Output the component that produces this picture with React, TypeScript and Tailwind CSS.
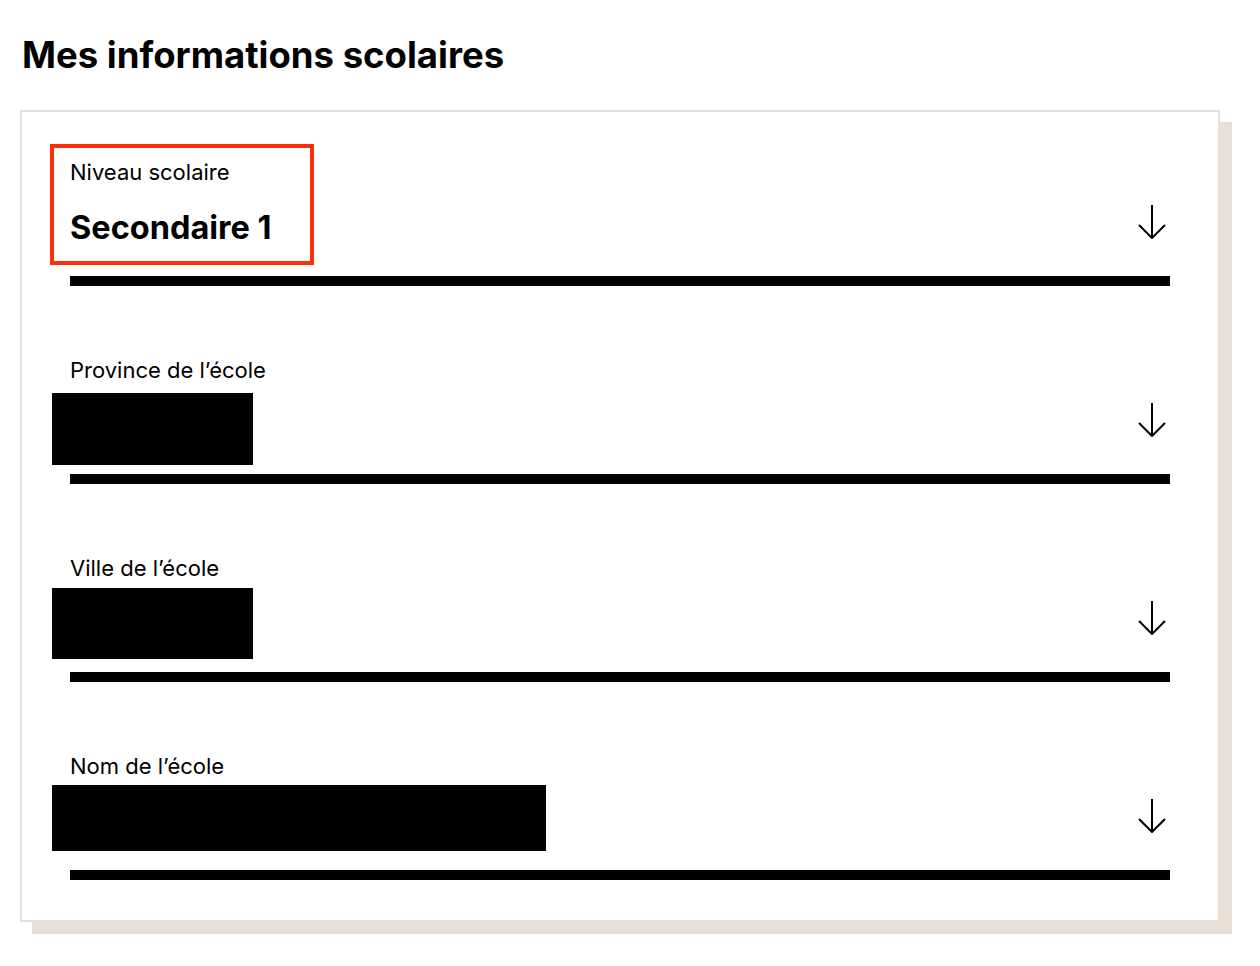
const fields = [
  { label: 'Niveau scolaire', value: 'Secondaire 1' },
  { label: 'Province de l’école', redact: 'mt-[11px] h-[72px] w-[201px]' },
  { label: 'Ville de l’école', redact: 'mt-[8px] h-[71px] w-[201px]' },
  { label: 'Nom de l’école', redact: 'mt-[7px] h-[66px] w-[494px]' },
];

function ArrowDown() {
  return (
    <svg width="28" height="34" viewBox="0 0 28 34" fill="none" className="mt-[21px] mr-[4px] shrink-0">
      <path d="M14 0V33" stroke="black" strokeWidth="2" />
      <path d="M1 20L14 33L27 20" stroke="black" strokeWidth="2" />
    </svg>
  );
}

function Field({ label, value, redact }: { label: string; value?: string; redact?: string }) {
  return (
    <div className="flex flex-col">
      <div className="relative">
        <div className="h-7 pt-[2px] text-[22px] leading-7">{label}</div>
        {value && (
          <div className="absolute -left-[20px] -top-[12px] w-[264px] h-[121px] border-4 border-[#ff2e0a]" />
        )}
      </div>
      <div className="flex h-[92px] items-start justify-between">
        {value ? (
          <div className="mt-[24px] text-[32.5px] leading-10 font-bold">{value}</div>
        ) : (
          <div className={`-ml-[18px] bg-black ${redact}`} />
        )}
        <ArrowDown />
      </div>
      <div className="h-[10px] bg-black" />
    </div>
  );
}

export default function App() {
  return (
    <div className="min-h-screen bg-white text-black px-[20px] pt-[30px]" style={{ fontFamily: 'Inter, "Noto Sans", sans-serif' }}>
      <h1 className="text-[36.5px] leading-[50px] font-bold ml-[2px] mb-[30px]">Mes informations scolaires</h1>
      <div className="w-[1200px] border-2 border-[#e7e0d6] bg-white px-[48px] pt-[44px] pb-[40px] shadow-[12px_12px_0_0_#e7e0d6]">
        <div className="flex flex-col gap-[68px]">
          {fields.map((f) => (
            <Field key={f.label} {...f} />
          ))}
        </div>
      </div>
    </div>
  );
}
